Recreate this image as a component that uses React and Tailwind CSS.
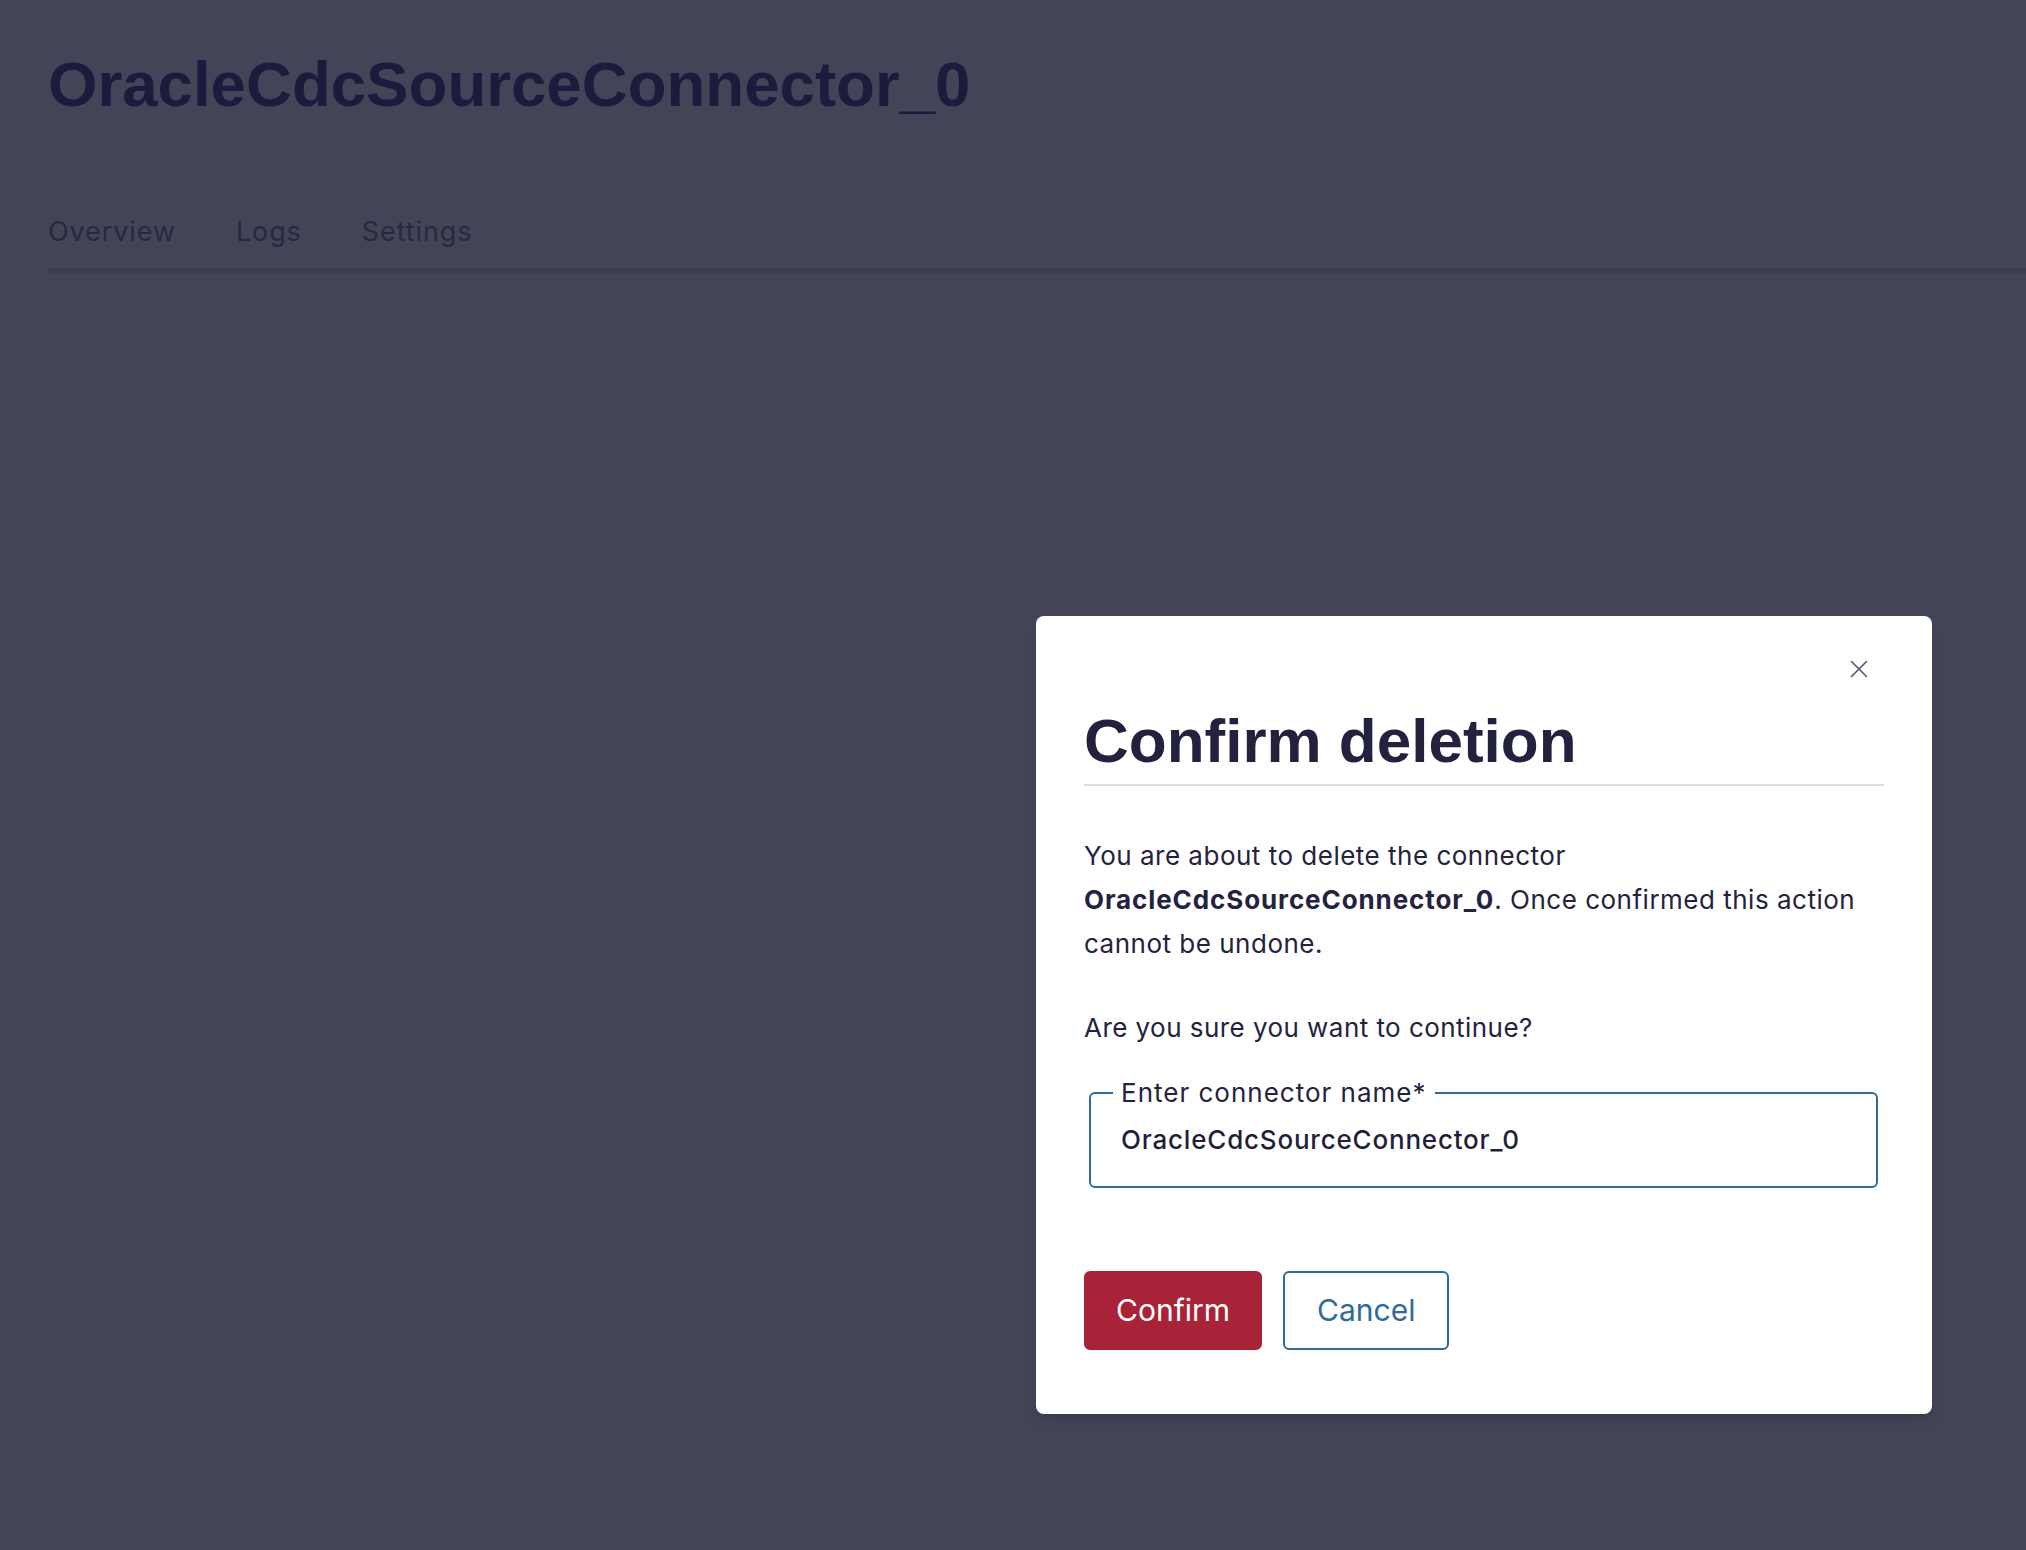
import React from "react";

export default function App() {
  return (
    <div className="relative min-h-screen w-full overflow-hidden bg-[#434457] font-['Inter',_'Noto_Sans',_sans-serif]">
      <div className="pl-12 pt-[46px]">
        <h1 className="font-['Liberation_Sans',_Arial,_sans-serif] text-[63.6px] font-bold leading-[1.2] text-[#1c1b3d]">
          OracleCdcSourceConnector_0
        </h1>
        <nav className="mt-[94px] flex gap-[60px] pb-[20px] text-[27px] leading-[32px] tracking-[0.9px] text-[#28283e]">
          <span>Overview</span>
          <span>Logs</span>
          <span>Settings</span>
        </nav>
        <div className="h-[6px] w-full bg-[#3c3d50]" />
      </div>

      <div className="absolute left-[1036px] top-[616px] w-[896px] rounded-[8px] bg-white px-12 pb-16 pt-[88px] shadow-lg">
        <button className="absolute right-[64px] top-[44px] flex h-[18px] w-[18px] items-center justify-center" aria-label="Close">
          <svg width="18" height="18" viewBox="0 0 18 18" fill="none">
            <path d="M1.5 1.5 L16.5 16.5 M16.5 1.5 L1.5 16.5" stroke="#55556f" strokeWidth="1.6" strokeLinecap="round" />
          </svg>
        </button>
        <h2 className="border-b-2 border-[#dcdce2] pb-[6px] font-['Liberation_Sans',_Arial,_sans-serif] text-[62px] font-bold leading-[74px] text-[#22223f]">
          Confirm deletion
        </h2>
        <p className="mt-12 text-[26px] leading-[44px] tracking-[0.5px] text-[#23233f]">
          You are about to delete the connector
          <br />
          <span className="font-bold tracking-[0.9px]">OracleCdcSourceConnector_0</span>. Once confirmed this action
          <br />
          cannot be undone.
        </p>
        <p className="mt-10 text-[26px] leading-[44px] tracking-[0.45px] text-[#23233f]">
          Are you sure you want to continue?
        </p>
        <fieldset className="ml-[5px] mr-[6px] mt-[30px] rounded-[6px] border-2 border-[#2f6a99] px-[22px] pb-[30px] pt-[18px]">
          <legend className="px-2 text-[26px] leading-[26px] tracking-[1px] text-[#23233f]">Enter connector name*</legend>
          <div className="pl-2 text-[26px] font-medium leading-[32px] tracking-[0.8px] text-[#1f1f3b]">OracleCdcSourceConnector_0</div>
        </fieldset>
        <div className="mt-[83px] flex gap-[21px]">
          <button className="flex h-[79px] items-center rounded-[6px] border-2 border-[#a82337] bg-[#a82337] px-[30px] text-[30px] text-white">
            Confirm
          </button>
          <button className="flex h-[79px] items-center rounded-[6px] border-2 border-[#2f6a99] bg-white px-8 text-[30px] text-[#2f6a99]">
            Cancel
          </button>
        </div>
      </div>
    </div>
  );
}
